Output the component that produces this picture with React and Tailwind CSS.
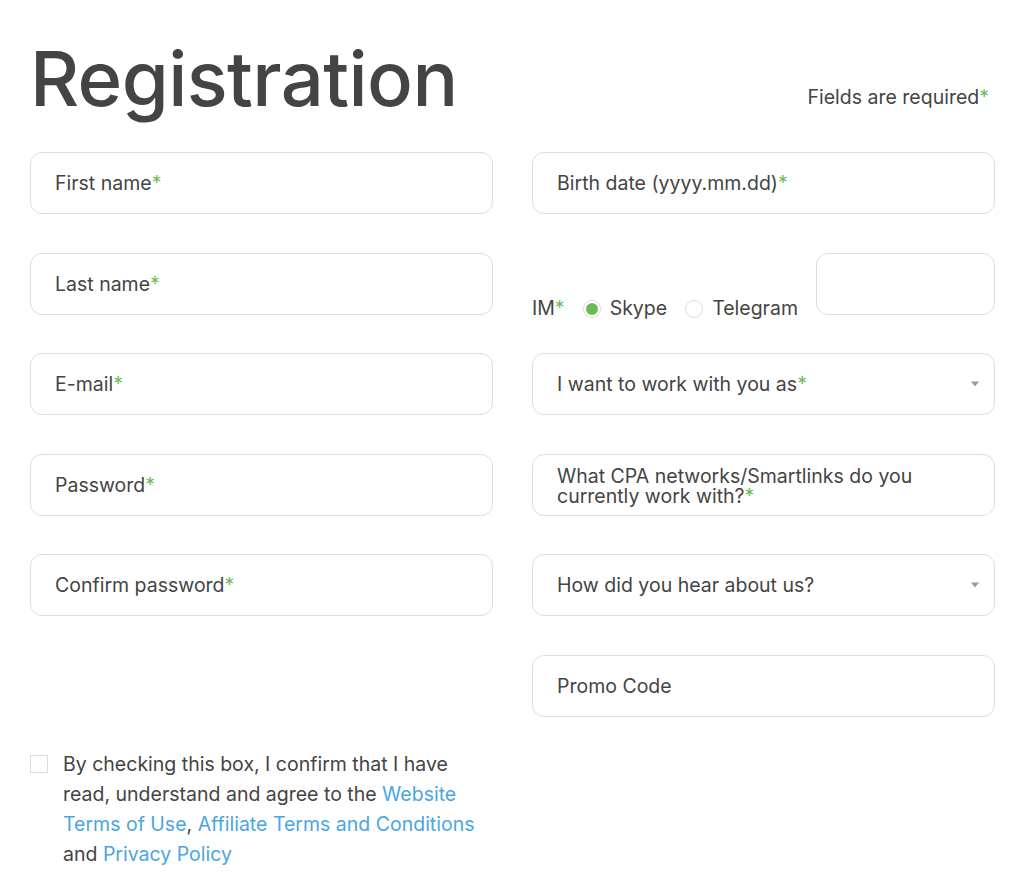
import { useState } from 'react';

const Req = () => <span className="text-[#6dbb57]">*</span>;

function Field({ label, required, select, multi }) {
  return (
    <div
      className={`relative flex h-[62px] items-center rounded-[12px] border border-[#dedede] bg-white pl-6 pr-6 pt-[2px] ${
        multi ? 'leading-[20px]' : ''
      }`}
    >
      <span className={multi ? 'pr-[30px]' : ''}>
        {label}
        {required && <Req />}
      </span>
      {select && (
        <span className="absolute right-[15px] top-1/2 -translate-y-1/2 border-x-[4px] border-t-[5px] border-x-transparent border-t-[#999]" />
      )}
    </div>
  );
}

function Radio({ label, checked, onClick }) {
  return (
    <button type="button" onClick={onClick} className="flex items-center gap-[9px]">
      <span className="flex h-[18px] w-[18px] items-center justify-center rounded-full border border-[#dcdcdc] bg-white">
        {checked && <span className="h-[12px] w-[12px] rounded-full bg-[#6dbb57]" />}
      </span>
      <span>{label}</span>
    </button>
  );
}

export default function App() {
  const [im, setIm] = useState('skype');
  const [agreed, setAgreed] = useState(false);

  return (
    <div className="min-h-[885px] w-[1024px] bg-white pl-[30px] pr-[29px] pt-[40px] text-[19.5px] text-[#444] [font-family:Inter,'Liberation_Sans',sans-serif]">
      {/* Header */}
      <div className="flex items-baseline justify-between">
        <h1 className="text-[76px] leading-none font-medium tracking-[-0.6px] text-[#444]">Registration</h1>
        <p className="relative -top-[2px] pr-[6px]">
          Fields are required<Req />
        </p>
      </div>

      {/* Form columns */}
      <div className="mt-[36px] grid grid-cols-2 gap-x-[39px]">
        <div className="flex flex-col gap-[38.5px]">
          <Field label="First name" required />
          <Field label="Last name" required />
          <Field label="E-mail" required />
          <Field label="Password" required />
          <Field label="Confirm password" required />
        </div>

        <div className="flex flex-col gap-[38.5px]">
          <Field label="Birth date (yyyy.mm.dd)" required />
          <div className="flex items-end">
            <div className="-mb-1 flex h-[20px] items-center">
              <span className="mr-[18px]">
                IM<Req />
              </span>
              <Radio label="Skype" checked={im === 'skype'} onClick={() => setIm('skype')} />
              <span className="w-[18px]" />
              <Radio label="Telegram" checked={im === 'telegram'} onClick={() => setIm('telegram')} />
            </div>
            <div className="ml-auto h-[62px] w-[179px] rounded-[12px] border border-[#dedede] bg-white" />
          </div>
          <Field label="I want to work with you as" required select />
          <Field label="What CPA networks/Smartlinks do you currently work with?" required multi />
          <Field label="How did you hear about us?" select />
          <Field label="Promo Code" />
        </div>
      </div>

      {/* Agreement */}
      <div className="mt-[32px] flex items-start gap-[15px] text-[19.5px] leading-[30px]">
        <button
          type="button"
          onClick={() => setAgreed(!agreed)}
          className="mt-[6px] flex h-[18px] w-[18px] shrink-0 items-center justify-center border border-[#dcdcdc] bg-white text-[12px] leading-none text-[#6dbb57]"
        >
          {agreed ? '✓' : ''}
        </button>
        <p className="w-[425px]">
          By checking this box, I confirm that I have read, understand and agree to the{' '}
          <a href="#" className="text-[#4aa6df]">Website Terms of Use</a>,{' '}
          <a href="#" className="text-[#4aa6df]">Affiliate Terms and Conditions</a> and{' '}
          <a href="#" className="text-[#4aa6df]">Privacy Policy</a>
        </p>
      </div>
    </div>
  );
}
